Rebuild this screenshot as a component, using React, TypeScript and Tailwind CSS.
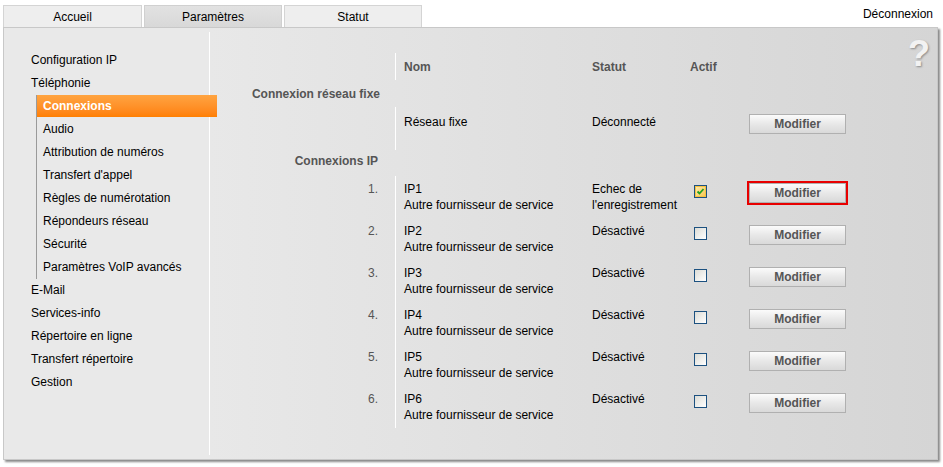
import React from 'react';

const navTop = ['Configuration IP', 'Téléphonie'];
const navSub = [
    'Audio',
    "Attribution de numéros",
    "Transfert d'appel",
    'Règles de numérotation',
    'Répondeurs réseau',
    'Sécurité',
    'Paramètres VoIP avancés',
];
const navBottom = ['E-Mail', 'Services-info', 'Répertoire en ligne', 'Transfert répertoire', 'Gestion'];

const ipRows = [1, 2, 3, 4, 5, 6].map(n => ({
    n,
    name: `IP${n}`,
    provider: 'Autre fournisseur de service',
    status: n === 1 ? ['Echec de', "l'enregistrement"] : ['Désactivé'],
    active: n === 1,
}));

const Checkbox: React.FC<{ checked?: boolean }> = ({ checked }) => (
    <div className="w-[13px] h-[13px] border border-[#1c5180] bg-linear-to-br from-[#dcdcd6] to-white flex items-center justify-center">
        {checked && (
            <div className="w-[11px] h-[11px] border border-[#f5c040] bg-linear-to-br from-[#fde9a8] to-[#f8c850] flex items-center justify-center">
                <svg width="9" height="9" viewBox="0 0 9 9">
                    <path d="M1.5 4.5 L3.5 6.5 L7.5 2" fill="none" stroke="#21a121" strokeWidth="1.8" />
                </svg>
            </div>
        )}
    </div>
);

const ModifyButton: React.FC<{ focused?: boolean }> = ({ focused }) => (
    <button
        className={`w-[97px] h-[20px] border border-[#b0b0b0] bg-linear-to-b from-[#fbfbfb] via-[#e8e8e8] to-[#d9d9d9] text-[12px] leading-none font-bold text-[#555] ${
            focused ? 'outline-2 outline-[#e80000]' : ''
        }`}
    >
        Modifier
    </button>
);

export default function App() {
    return (
        <div className="w-[943px] h-[467px] bg-white font-['Liberation_Sans',Arial,sans-serif] text-[12px] text-black relative">
            {/* tabs */}
            <div className="flex items-end h-[27px] pl-[3px] pr-[10px]">
                <div className="flex gap-[2px]">
                    <div className="w-[139px] h-[22px] flex items-center justify-center bg-[#eeeeee] border border-b-0 border-[#d4d4d4]">Accueil</div>
                    <div className="w-[138px] h-[22px] flex items-center justify-center bg-linear-to-b from-[#e2e2e2] to-[#d8d8d8] border border-b-0 border-[#d0d0d0]">Paramètres</div>
                    <div className="w-[138px] h-[22px] flex items-center justify-center bg-[#eeeeee] border border-b-0 border-[#d4d4d4]">Statut</div>
                </div>
                <div className="ml-auto self-start pt-[5px]">Déconnexion</div>
            </div>

            {/* panel */}
            <div className="ml-[3px] w-[935px] h-[433px] flex border border-[#c8c8c8] shadow-[2px_2px_2px_#8a8a8a] bg-[#e9e9e9]">
                <nav className="w-[205px] pt-[21px] pl-[27px] leading-[23px]">
                    {navTop.map(t => (
                        <div key={t} className="h-[23px]">{t}</div>
                    ))}
                    <div className="ml-[5px] border-l border-[#9a9a9a]">
                        <div className="h-[22px] mb-px -mr-[8px] relative z-10 bg-linear-to-b from-[#ffa440] to-[#ff7f00] text-white font-bold pl-[6px] leading-[22px]">
                            Connexions
                        </div>
                        {navSub.map(t => (
                            <div key={t} className="h-[23px] pl-[6px]">{t}</div>
                        ))}
                    </div>
                    {navBottom.map(t => (
                        <div key={t} className="h-[23px]">{t}</div>
                    ))}
                </nav>
                <div className="w-px bg-white my-[4px]" />
                <div className="flex-1 relative bg-linear-to-r from-[#e8e8e8] to-[#d5d5d5] pt-[25px]">
                    <div className="absolute top-[8px] right-[7px] text-[36px] leading-none font-bold text-[#f2f2f2] [text-shadow:1px_1px_2px_#8c8c8c]">?</div>

                    {/* header */}
                    <div className="flex h-[27px] leading-4 font-bold text-[#555]">
                        <div className="w-[185px]" />
                        <div className="border-l border-white w-[197px] pl-[8px] flex items-center">Nom</div>
                        <div className="w-[98px] flex items-center">Statut</div>
                        <div className="w-[59px] flex items-center">Actif</div>
                    </div>

                    <div className="flex h-[27px] items-center font-bold text-[#555]">
                        <div className="w-[185px] pr-[15px] text-right">Connexion réseau fixe</div>
                    </div>

                    <div className="flex h-[43px] leading-4">
                        <div className="w-[185px]" />
                        <div className="border-l border-white w-[197px] pl-[8px] pt-[7px]">Réseau fixe</div>
                        <div className="w-[98px] pt-[7px]">Déconnecté</div>
                        <div className="w-[59px]" />
                        <div className="pt-[7px]"><ModifyButton /></div>
                    </div>

                    <div className="flex h-[26px] leading-4 pt-[3px] font-bold text-[#555]">
                        <div className="w-[185px] pr-[17px] text-right">Connexions IP</div>
                    </div>

                    {ipRows.map(r => (
                        <div key={r.n} className="flex h-[42px] leading-4">
                            <div className="w-[185px] pr-[17px] pt-[5px] text-right text-[#555]">{r.n}.</div>
                            <div className="border-l border-white w-[197px] pl-[8px] pt-[5px]">
                                <div>{r.name}</div>
                                <div>{r.provider}</div>
                            </div>
                            <div className="w-[98px] pt-[5px]">
                                {r.status.map(s => (
                                    <div key={s}>{s}</div>
                                ))}
                            </div>
                            <div className="w-[59px] pt-[9px] pl-[4px]">
                                <Checkbox checked={r.active} />
                            </div>
                            <div className="pt-[7px]"><ModifyButton focused={r.n === 1} /></div>
                        </div>
                    ))}
                </div>
            </div>
        </div>
    );
}
